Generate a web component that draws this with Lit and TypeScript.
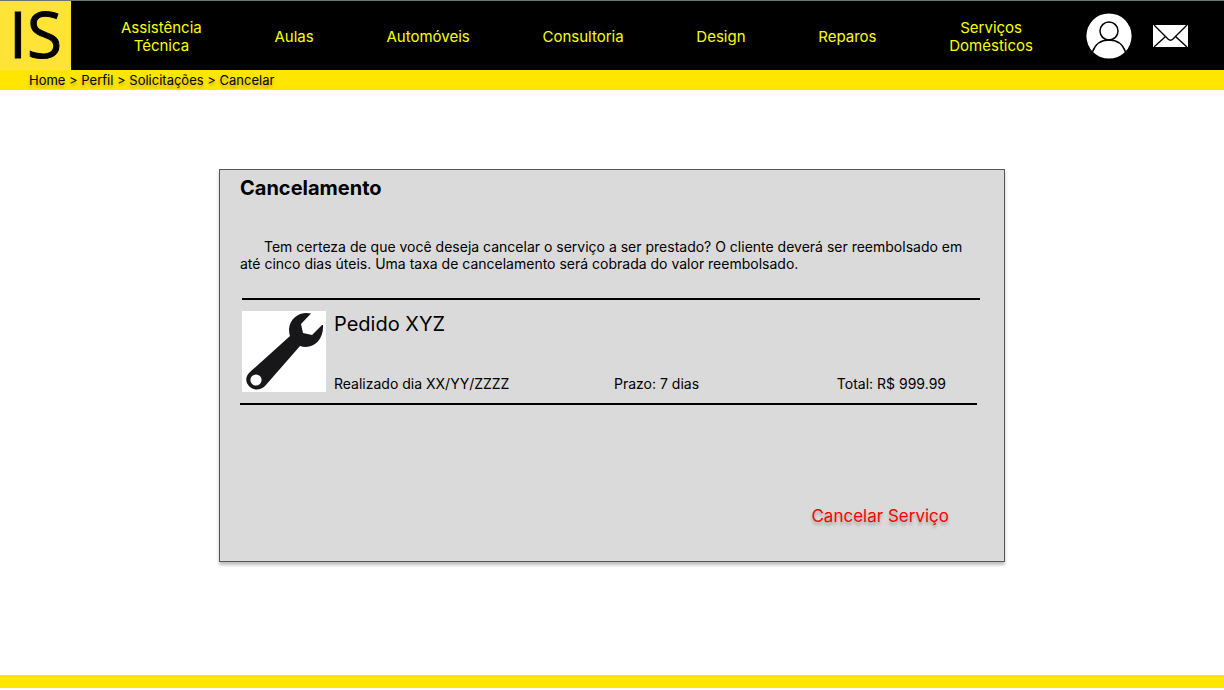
import { LitElement, html, css } from "lit";
import { customElement, property } from "lit/decorators.js";

@customElement("site-header")
class SiteHeader extends LitElement {
  @property({ attribute: false }) categories: string[] = [];

  static styles = css`
    :host { display: block; }
    .bar {
      display: flex;
      align-items: center;
      min-height: 70px;
      box-sizing: border-box;
      background: #000;
      border-top: 1px solid #6b7474;
    }
    .logo {
      display: flex;
      align-items: flex-start;
      justify-content: center;
      align-self: stretch;
      width: 71px;
      flex: none;
      background: #ffe437;
      color: #000;
      font: 64px/66px "Open Sans", sans-serif;
      -webkit-text-stroke: 1px #000;
      text-decoration: none;
    }
    .nav {
      flex: 1;
      display: flex;
      align-items: center;
      justify-content: space-between;
      padding: 2px 53px 0 50px;
    }
    .nav a {
      color: #faff00;
      font-size: 15px;
      line-height: 18px;
      text-align: center;
      text-decoration: none;
    }
    .stack { width: min-content; }
    .tools {
      display: flex;
      align-items: center;
      gap: 21px;
      padding-right: 36px;
    }
    .tool {
      border: 0;
      padding: 0;
      background: none;
      display: flex;
      cursor: pointer;
    }
  `;

  render() {
    return html`
      <header class="bar">
        <a class="logo" href="#home">IS</a>
        <nav class="nav" aria-label="Categorias">
          ${this.categories.map((c) => html`<a class="stack" href="#categoria">${c}</a>`)}
        </nav>
        <div class="tools">
          <button class="tool" aria-label="Perfil">
            <svg width="46" height="46" viewBox="0 0 46 46">
              <circle cx="23" cy="23" r="22.6" fill="#fff" />
              <g fill="none" stroke="#000" stroke-width="1.5">
                <circle cx="23" cy="18" r="9" />
                <path d="M6.500 39 C9 31.500 15 27 23 27 S37 31.500 39.500 39" />
              </g>
            </svg>
          </button>
          <button class="tool" aria-label="Mensagens">
            <svg width="35" height="22" viewBox="0 0 35 22">
              <rect width="35" height="22" fill="#fff" />
              <path d="M1 0 L15 14 Q17.500 16.500 20 14 L34 0 M1 22 L12.500 11.500 M34 22 L22.500 11.500"
                fill="none" stroke="#000" stroke-width="1.4" />
            </svg>
          </button>
        </div>
      </header>
    `;
  }
}

@customElement("crumb-trail")
class CrumbTrail extends LitElement {
  @property({ attribute: false }) steps: string[] = [];

  static styles = css`
    :host { display: block; background: #ffe600; }
    .trail {
      padding: 0 29px;
      font-size: 13px;
      line-height: 20px;
      color: #000;
      text-shadow: 0 3px 3px rgba(0, 0, 0, 0.25);
    }
    .trail a { color: inherit; text-decoration: none; }
  `;

  render() {
    return html`<nav class="trail" aria-label="Trilha">${this.steps.map(
      (s, i) => html`${i ? " > " : ""}<a href="#trilha">${s}</a>`
    )}</nav>`;
  }
}

@customElement("order-summary")
class OrderSummary extends LitElement {
  static styles = css`
    :host { display: block; }
    .rule { height: 2px; background: #000; }
    .top { margin-left: 2px; }
    .bottom { margin-right: 3px; }
    .order {
      display: flex;
      gap: 8px;
      padding: 11px 34px 11px 2px;
    }
    .picture { flex: none; display: block; background: #fff; }
    .info {
      flex: 1;
      display: flex;
      flex-direction: column;
      justify-content: space-between;
    }
    .name { margin: 0; font-size: 20px; line-height: 26px; font-weight: 400; }
    .facts {
      display: grid;
      grid-template-columns: 280px 1fr auto;
      font-size: 14px;
      line-height: 17px;
    }
  `;

  render() {
    return html`
      <div class="rule top"></div>
      <div class="order">
        <svg class="picture" width="84" height="81" viewBox="0 0 84 81" role="img" aria-label="Chave inglesa">
          <path fill="#17171a" d="M69 2.500 C59 0 48 6 47 18 Q47 22 48 25 L8 61 C3 65 3 72 8 76 C13 80 19 79 23 75 L58 35 C70 39 82 30 81 14 L80 14 L70 24 L61 22 L59 13 Z" />
          <circle cx="14" cy="69" r="5.600" fill="#fff" />
        </svg>
        <div class="info">
          <h2 class="name">Pedido XYZ</h2>
          <div class="facts">
            <span>Realizado dia XX/YY/ZZZZ</span>
            <span>Prazo: 7 dias</span>
            <span>Total: R$ 999.99</span>
          </div>
        </div>
      </div>
      <div class="rule bottom"></div>
    `;
  }
}

@customElement("app-root")
class AppRoot extends LitElement {
  static styles = css`
    :host {
      display: flex;
      flex-direction: column;
      min-height: 100vh;
      box-sizing: border-box;
      padding-bottom: 2px;
      background: #fff;
      color: #000;
      font-family: Inter, sans-serif;
    }
    .content { flex: 1; padding: 79px 24px; }
    .card {
      box-sizing: border-box;
      max-width: 786px;
      margin: 0 auto;
      padding: 6px 24px 33px 20px;
      background: #dadada;
      border: 1px solid #555;
      box-shadow: 0 3px 3px rgba(0, 0, 0, 0.25);
    }
    .title { margin: 0; font-size: 20px; line-height: 24px; font-weight: 700; }
    .message {
      margin: 38px 0 26px;
      font-size: 14px;
      line-height: 17px;
      text-indent: 24px;
    }
    .actions { display: flex; justify-content: flex-end; padding: 99px 31px 0 0; }
    .cancel {
      border: 0;
      padding: 0;
      background: none;
      color: #f00;
      font-family: inherit;
      font-size: 17px;
      line-height: 24px;
      text-shadow: 0 3px 3px rgba(0, 0, 0, 0.25);
      cursor: pointer;
    }
    .footer { height: 13px; background: #ffe600; }
  `;

  render() {
    return html`
      <site-header
        .categories=${["Assistência Técnica", "Aulas", "Automóveis", "Consultoria", "Design", "Reparos", "Serviços Domésticos"]}
      ></site-header>
      <crumb-trail .steps=${["Home", "Perfil", "Solicitações", "Cancelar"]}></crumb-trail>
      <main class="content">
        <section class="card">
          <h1 class="title">Cancelamento</h1>
          <p class="message">
            Tem certeza de que você deseja cancelar o serviço a ser prestado? O cliente deverá ser reembolsado em até
            cinco dias úteis. Uma taxa de cancelamento será cobrada do valor reembolsado.
          </p>
          <order-summary></order-summary>
          <div class="actions"><button class="cancel">Cancelar Serviço</button></div>
        </section>
      </main>
      <footer class="footer"></footer>
    `;
  }
}
